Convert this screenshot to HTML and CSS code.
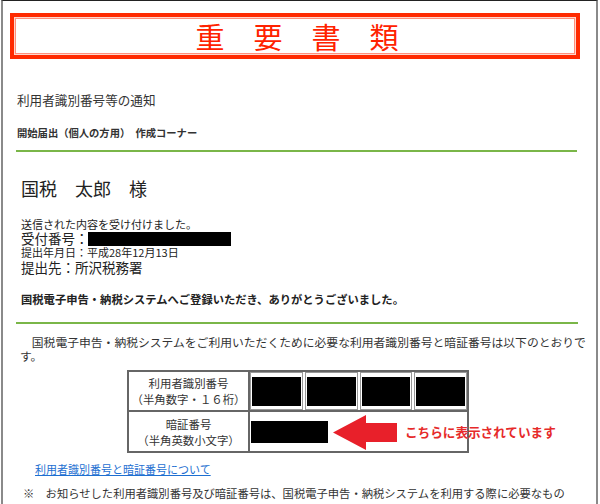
FILE: index.html
```html
<!DOCTYPE html>
<html lang="ja">
<head>
  <meta charset="UTF-8">
  <title>利用者識別番号等の通知</title>
  <meta name="viewport" content="width=device-width, initial-scale=1.0">
  <link rel="stylesheet" href="styles.css">
</head>
<body>

  <div class="page">
    <div class="banner">
      <div class="banner-text">重　要　書　類</div>
    </div>

    <div class="doc-title">利用者識別番号等の通知</div>
    <div class="doc-sub">開始届出（個人の方用）　作成コーナー</div>
    <div class="rule"></div>

    <div class="name">国税　太郎　様</div>
    <div class="small">送信された内容を受け付けました。</div>
    <div class="big">受付番号：<span class="mask mask-receipt"></span></div>
    <div class="small small-tight">提出年月日：平成28年12月13日</div>
    <div class="big big-dest">提出先：所沢税務署</div>

    <div class="thanks">国税電子申告・納税システムへご登録いただき、ありがとうございました。</div>
    <div class="rule rule-2"></div>

    <p class="lead">　国税電子申告・納税システムをご利用いただくために必要な利用者識別番号と暗証番号は以下のとおりです。</p>

    <div class="ids">
      <div class="ids-row">
        <div class="ids-head">利用者識別番号<br>（半角数字・１６桁）</div>
        <div class="ids-cells">
          <div class="ids-cell"><span class="mask"></span></div>
          <div class="ids-cell"><span class="mask"></span></div>
          <div class="ids-cell"><span class="mask"></span></div>
          <div class="ids-cell"><span class="mask"></span></div>
        </div>
      </div>
      <div class="ids-row ids-row-last">
        <div class="ids-head">暗証番号<br>（半角英数小文字）</div>
        <div class="ids-pin"><span class="mask mask-pin"></span></div>
      </div>

      <!-- callout drawn over the table -->
      <svg class="arrow" width="64" height="35" viewBox="0 0 64 35">
        <polygon points="0,17.5 33,0 33,8 64,8 64,27 33,27 33,35" fill="#e8202a"/>
      </svg>
      <span class="callout">こちらに表示されています</span>
    </div>

    <a class="link" href="#">利用者識別番号と暗証番号について</a>

    <div class="note">※　お知らせした利用者識別番号及び暗証番号は、国税電子申告・納税システムを利用する際に必要なもの</div>
  </div>

</body>
</html>
```

FILE: styles.css
```css
* { box-sizing: border-box; margin: 0; padding: 0; }
html, body { overflow: hidden; }
body {
  background: #fff;
  font-family: "Noto Sans CJK JP", "Noto Sans", sans-serif;
  color: #222;
}
.page {
  margin-left: 1px;
  width: 597px;
  height: 504px;
  border-top: 1px solid #222;
  border-left: 2px solid #8a8a8a;
  border-right: 2px solid #8a8a8a;
  overflow: hidden;
}
.banner {
  margin: 12px 0 0 7px;
  width: 570px;
  height: 46px;
  border: 4px solid #ff2a00;
  box-shadow: inset 0 0 0 1px #ffd6cc, inset 0 0 0 2px #ff8f7c;
  display: flex;
  align-items: center;
  justify-content: center;
}
.banner-text {
  color: #ff2200;
  font-size: 29px;
  line-height: 30px;
  padding-left: 4px;
}
.doc-title {
  margin: 33px 0 0 14px;
  font-size: 12.6px;
  line-height: 16px;
  color: #333;
}
.doc-sub {
  margin: 18px 0 0 14px;
  font-size: 10.3px;
  line-height: 14px;
  font-weight: bold;
  color: #333;
}
.rule {
  margin: 10px 0 0 13px;
  width: 561px;
  height: 2px;
  background: #7ab648;
}
.rule-2 { margin-top: 16px; width: 562px; }
.name {
  margin: 25px 0 0 18px;
  font-size: 18px;
  line-height: 22px;
}
.small {
  margin: 18px 0 0 18px;
  font-size: 11px;
  line-height: 14px;
}
.small-tight { margin-top: 0; line-height: 12px; }
.big {
  margin-left: 18px;
  font-size: 13.5px;
  line-height: 15px;
  display: flex;
  align-items: center;
}
.big-dest { line-height: 18px; }
.mask { display: block; background: #000; width: 100%; height: 29px; }
.mask-receipt { width: 143px; height: 14px; margin-left: -1px; }
.thanks {
  margin: 16px 0 0 18px;
  font-size: 11.3px;
  line-height: 14px;
  font-weight: bold;
}
.lead {
  margin: 11px 0 0 17px;
  width: 570px;
  font-size: 11.8px;
  line-height: 14px;
  color: #333;
}
.ids {
  position: relative;
  margin: 7px 0 0 124px;
  width: 342px;
  border: 2px solid #666;
}
.ids-row {
  display: grid;
  grid-template-columns: 121px 1fr;
  height: 40px;
  border-bottom: 2px solid #666;
}
.ids-row-last { height: 39px; border-bottom: none; }
.ids-head {
  border-right: 2px solid #666;
  display: flex;
  flex-direction: column;
  align-items: center;
  justify-content: center;
  text-align: center;
  font-size: 11.4px;
  line-height: 16px;
  color: #333;
}
.ids-cells { display: flex; gap: 2px; }
.ids-cell {
  flex: 1;
  border: 1px solid #999;
  display: flex;
  align-items: center;
  padding: 0 1px;
}
.ids-pin { display: flex; align-items: center; padding-left: 1px; }
.mask-pin { width: 77px; height: 22px; }
.arrow { position: absolute; left: 204px; top: 43px; }
.callout {
  position: absolute;
  left: 276px;
  top: 52px;
  white-space: nowrap;
  color: #e62a2a;
  font-size: 12.6px;
  line-height: 16px;
  font-weight: bold;
}
.link {
  display: block;
  margin: 9px 0 0 32px;
  font-size: 11px;
  line-height: 14px;
  color: #1d6fd1;
  text-decoration: underline;
}
.note {
  margin: 10px 0 0 20px;
  font-size: 11.3px;
  line-height: 14px;
  white-space: nowrap;
  color: #333;
}
```
